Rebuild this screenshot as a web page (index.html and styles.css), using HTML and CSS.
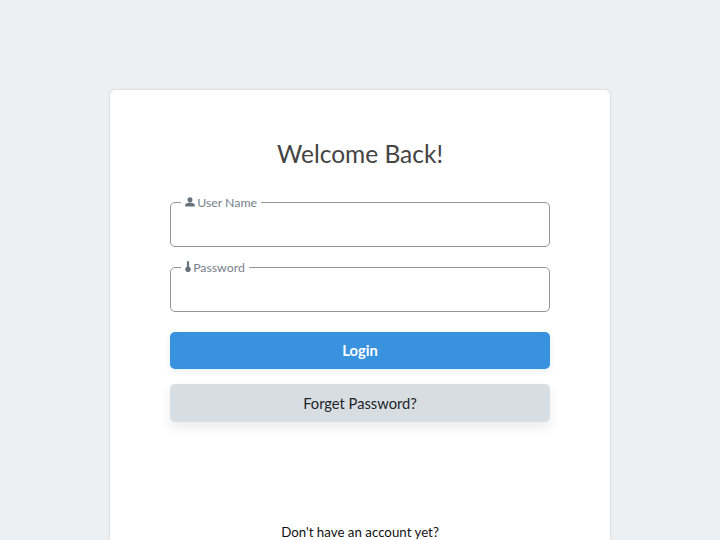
FILE: index.html
```html
<!DOCTYPE html>
<html lang="en">
<head>
    <meta charset="UTF-8">
    <meta name="viewport" content="width=device-width, initial-scale=1.0">
    <title>Login</title>
    <link rel="stylesheet" href="styles.css">
</head>
<body>
    <div class="card">
        <h2>Welcome Back!</h2>
        <form onsubmit="event.preventDefault();">
            <fieldset class="field">
                <legend>
                    <svg class="icon" width="10" height="10" viewBox="0 0 10 10"><circle cx="5" cy="2.7" r="2.5"/><path d="M0.2 9.6V8C0.2 6.5 2.8 5.6 5 5.6S9.8 6.5 9.8 8V9.6Z"/></svg>
                    User Name
                </legend>
                <input type="text" class="input-field">
            </fieldset>
            <fieldset class="field">
                <legend>
                    <svg class="icon" width="6" height="11" viewBox="0 0 6 11"><path d="M1.9 0.3H4.1V5.8A2.8 2.8 0 1 1 1.9 5.8Z"/></svg>
                    Password
                </legend>
                <input type="password" class="input-field">
            </fieldset>
            <button type="submit" class="btn btn-primary">Login</button>
            <button type="button" class="btn btn-light">Forget Password?</button>
        </form>
        <p class="signup">Don't have an account yet?</p>
    </div>
</body>
</html>
```

FILE: styles.css
```css
html, body {
    height: 100%;
    overflow: hidden;
}
body {
    font-family: Lato, "Noto Sans", sans-serif;
    margin: 0;
    background-color: #ecf0f3;
    color: #212529;
}
.card {
    box-sizing: border-box;
    width: 500px;
    height: 450px;
    margin: 90px auto 0;
    padding: 46px 60px 0;
    background-color: #fff;
    border-radius: 5px 5px 0 0;
    box-shadow: 0 0 2px rgba(0, 0, 0, 0.22);
}
h2 {
    margin: 0 0 22px;
    font-size: 24.5px;
    font-weight: 400;
    line-height: 36px;
    text-align: center;
    color: #444;
}
.field {
    box-sizing: border-box;
    height: 53px;
    min-width: 0;
    margin: 0 0 12px;
    padding: 0;
    border: 1px solid #959595;
    border-radius: 5px;
}
.field legend {
    margin-left: 10px;
    padding: 2px 4px 0;
    font-size: 12.3px;
    line-height: 14px;
    color: #75808b;
}
.icon {
    fill: #66717c;
    margin-right: -1px;
}
.input-field {
    display: block;
    width: 100%;
    border: none;
    outline: none;
    background: none;
    height: 28px;
}
.btn {
    display: block;
    width: 100%;
    height: 37px;
    border: none;
    border-radius: 5px;
    font-family: inherit;
    font-size: 14.7px;
    cursor: pointer;
}
.btn-primary {
    margin-top: 20px;
    margin-bottom: 15px;
    padding-bottom: 3px;
    background-color: #3892de;
    color: #fff;
    font-weight: 700;
    box-shadow: 0 2px 6px rgba(56, 146, 222, 0.15);
}
.btn-light {
    height: 38px;
    background-color: #d8dde2;
    color: #212529;
    box-shadow: 0 6px 12px rgba(0, 0, 0, 0.08);
}
.signup {
    margin: 102px 0 0;
    font-size: 13.3px;
    line-height: 16px;
    text-align: center;
    color: #111;
}
```
